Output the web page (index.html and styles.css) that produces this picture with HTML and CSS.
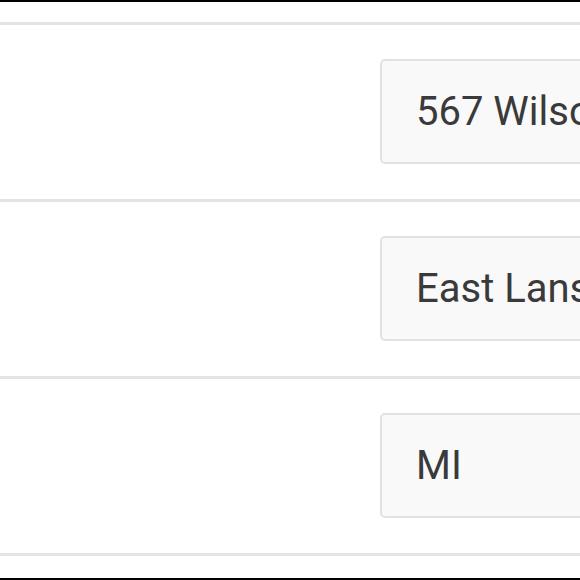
FILE: index.html
```html
<!DOCTYPE html>
<html lang="en">
<head>
  <meta charset="UTF-8" />
  <meta name="viewport" content="width=device-width, initial-scale=1.0"/>
  <title>Address</title>
  <link rel="stylesheet" href="styles.css">
</head>
<body>
  <div class="frame">
    <div class="field-row">
      <div class="field-input">567 Wilson Road</div>
    </div>
    <div class="field-row">
      <div class="field-input">East Lansing</div>
    </div>
    <div class="field-row">
      <div class="field-input">MI</div>
    </div>
  </div>
</body>
</html>
```

FILE: styles.css
```css
* { margin: 0; padding: 0; box-sizing: border-box; }
body { background: white; overflow: hidden; font-family: Roboto, "Liberation Sans", sans-serif; }

.frame {
  width: 580px; height: 580px; overflow: hidden;
  border-top: 2px solid black; border-bottom: 2px solid black;
  padding-top: 20px;
  display: flex; flex-direction: column;
}

.field-row {
  border-top: 3px solid #e4e4e4;
  padding: 34px 0 35px 380px;
  display: flex;
}
.field-row:last-child { border-bottom: 3px solid #e4e4e4; }

.field-input {
  flex-shrink: 0;
  width: 320px; height: 105px;
  display: flex; align-items: center;
  padding-left: 34px;
  background: #f9f9f9;
  border: 2px solid #e2e2e2; border-radius: 5px;
  color: #3a3a3a; font-size: 40px;
  white-space: nowrap;
}
```
